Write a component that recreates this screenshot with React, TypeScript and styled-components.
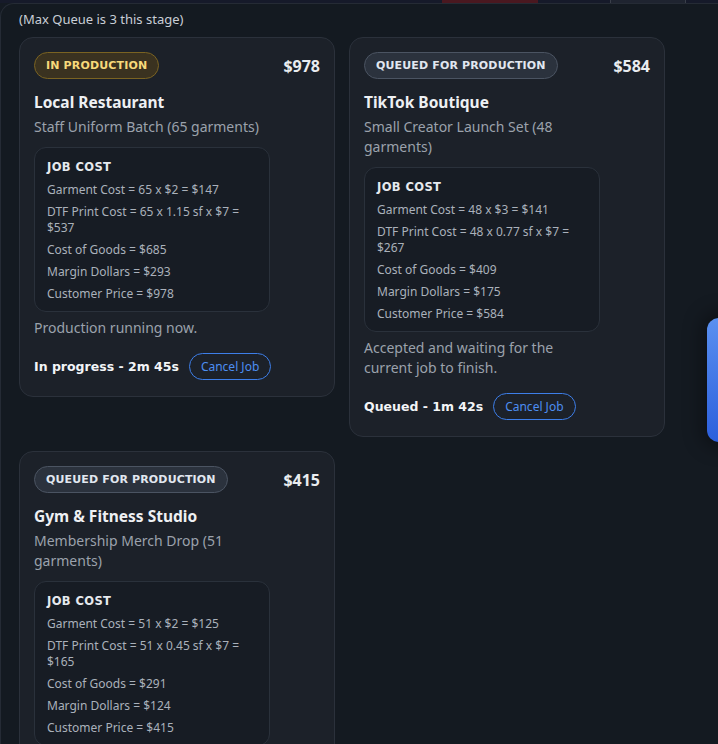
import React from 'react'
import styled, { createGlobalStyle } from 'styled-components'

type Status = 'production' | 'queued'

interface Job {
    status: Status
    price: string
    client: string
    order: string
    costs: string[]
    note: string
    timer: string
}

const jobs: Job[] = [
    {
        status: 'production',
        price: '$978',
        client: 'Local Restaurant',
        order: 'Staff Uniform Batch (65 garments)',
        costs: [
            'Garment Cost = 65 x $2 = $147',
            'DTF Print Cost = 65 x 1.15 sf x $7 = $537',
            'Cost of Goods = $685',
            'Margin Dollars = $293',
            'Customer Price = $978',
        ],
        note: 'Production running now.',
        timer: 'In progress - 2m 45s',
    },
    {
        status: 'queued',
        price: '$584',
        client: 'TikTok Boutique',
        order: 'Small Creator Launch Set (48 garments)',
        costs: [
            'Garment Cost = 48 x $3 = $141',
            'DTF Print Cost = 48 x 0.77 sf x $7 = $267',
            'Cost of Goods = $409',
            'Margin Dollars = $175',
            'Customer Price = $584',
        ],
        note: 'Accepted and waiting for the current job to finish.',
        timer: 'Queued - 1m 42s',
    },
    {
        status: 'queued',
        price: '$415',
        client: 'Gym & Fitness Studio',
        order: 'Membership Merch Drop (51 garments)',
        costs: [
            'Garment Cost = 51 x $2 = $125',
            'DTF Print Cost = 51 x 0.45 sf x $7 = $165',
            'Cost of Goods = $291',
            'Margin Dollars = $124',
            'Customer Price = $415',
        ],
        note: 'Accepted and waiting for the current job to finish.',
        timer: 'Queued - 1m 10s',
    },
]

const App = () => {
    return (
        <>
            <GlobalStyle />
            <Screen>
                <TopStrip>
                    <RedChip />
                    <DarkChip />
                </TopStrip>
                <Panel>
                    <Hint>(Max Queue is 3 this stage)</Hint>
                    <Grid>
                        {jobs.map((job, index) => (
                            <Card key={`job-card-${index}`}>
                                <Main>
                                    <Badge $status={job.status}>
                                        {job.status === 'production' ? 'IN PRODUCTION' : 'QUEUED FOR PRODUCTION'}
                                    </Badge>
                                    <Client>{job.client}</Client>
                                    <Order>{job.order}</Order>
                                    <CostBox>
                                        <CostTitle>JOB COST</CostTitle>
                                        {job.costs.map((line, i) => (
                                            <CostLine key={`cost-${index}-${i}`}>{line}</CostLine>
                                        ))}
                                    </CostBox>
                                    <Note>{job.note}</Note>
                                    <Footer>
                                        <Timer>{job.timer}</Timer>
                                        <CancelButton>Cancel Job</CancelButton>
                                    </Footer>
                                </Main>
                                <Price>{job.price}</Price>
                            </Card>
                        ))}
                    </Grid>
                </Panel>
                <SideTab />
            </Screen>
        </>
    )
}

const GlobalStyle = createGlobalStyle`
    html, body {
        margin: 0;
        padding: 0;
        background: #10141c;
        font-family: "Noto Sans", "Open Sans", sans-serif;
    }
    #root {
        height: 744px;
        overflow: hidden;
    }
`

const Screen = styled.div`
    position: relative;
    height: 744px;
    display: flex;
    flex-flow: column nowrap;
    overflow: hidden;
    background: #141a22;
`

const TopStrip = styled.div`
    height: 3px;
    flex: 0 0 auto;
    background: #161a2a;
    display: flex;
    padding-left: 442px;
    gap: 72px;
`

const RedChip = styled.div`
    width: 96px;
    height: 3px;
    background: #4a1820;
`

const DarkChip = styled.div`
    width: 74px;
    height: 3px;
    background: #1f2430;
    border-left: 1px solid #3a3f4a;
    border-right: 1px solid #3a3f4a;
`

const Panel = styled.div`
    flex: 1 1 auto;
    background: #141a21;
    border-top: 1px solid #252b35;
    border-left: 1px solid #252b35;
    border-top-left-radius: 14px;
    padding: 6px 0 0 18px;
`

const Hint = styled.div`
    font-size: 13px;
    color: #c9ced6;
    line-height: 18px;
    margin-bottom: 9px;
`

const Grid = styled.div`
    display: grid;
    grid-template-columns: repeat(2, 316px);
    gap: 14px;
    align-items: start;
`

const Card = styled.div`
    background: #1c2129;
    border: 1px solid #2b313b;
    border-radius: 14px;
    padding: 14px 14px 16px 14px;
    display: flex;
    flex-flow: row nowrap;
    justify-content: space-between;
    gap: 12px;
`

const Main = styled.div`
    width: 236px;
    display: flex;
    flex-flow: column nowrap;
    align-items: flex-start;
`

const Badge = styled.span<{ $status: Status }>`
    display: inline-flex;
    align-items: center;
    box-sizing: border-box;
    height: 27px;
    padding: 0 11px;
    border-radius: 999px;
    font-family: "DejaVu Sans", Verdana, sans-serif;
    font-weight: 700;
    font-size: 11px;
    letter-spacing: 0.15px;
    background: ${p => (p.$status === 'production' ? '#3a3220' : '#2b323d')};
    border: 1px solid ${p => (p.$status === 'production' ? '#7a6322' : '#4b5462')};
    color: ${p => (p.$status === 'production' ? '#f7d97a' : '#e1e7f0')};
`

const Client = styled.div`
    margin-top: 12px;
    font-size: 15.5px;
    font-weight: 700;
    color: #eef0f3;
    line-height: 22px;
`

const Order = styled.div`
    margin-top: 4px;
    font-size: 14px;
    color: #9ba2ac;
    line-height: 20px;
`

const CostBox = styled.div`
    margin-top: 10px;
    width: 100%;
    box-sizing: border-box;
    background: #171c24;
    border: 1px solid #2a313b;
    border-radius: 12px;
    padding: 11px 12px 9px 12px;
    display: flex;
    flex-flow: column nowrap;
    gap: 6px;
`

const CostTitle = styled.div`
    font-family: "DejaVu Sans", Verdana, sans-serif;
    font-weight: 700;
    font-size: 11.5px;
    letter-spacing: 0.4px;
    color: #e6e9ee;
    line-height: 16px;
    margin-bottom: 1px;
`

const CostLine = styled.div`
    font-size: 12px;
    color: #aab1bb;
    line-height: 16px;
`

const Note = styled.div`
    margin-top: 6px;
    font-size: 14px;
    color: #9ba2ac;
    line-height: 20px;
`

const Footer = styled.div`
    margin-top: 15px;
    display: flex;
    flex-flow: row nowrap;
    align-items: center;
    gap: 10px;
    white-space: nowrap;
`

const Timer = styled.span`
    font-family: "DejaVu Sans", Verdana, sans-serif;
    font-weight: 700;
    font-size: 12.5px;
    color: #f3f5f7;
`

const CancelButton = styled.button`
    height: 27px;
    padding: 0 11px;
    border-radius: 999px;
    background: transparent;
    border: 1px solid #3d7ee8;
    color: #4d8ef2;
    font-family: "Noto Sans", sans-serif;
    font-size: 12px;
    cursor: pointer;
`

const Price = styled.div`
    margin-top: 3px;
    font-size: 16px;
    font-weight: 700;
    color: #e9ecef;
    line-height: 22px;
    white-space: nowrap;
`

const SideTab = styled.div`
    position: absolute;
    left: 707px;
    top: 318px;
    width: 40px;
    height: 124px;
    border-radius: 12px;
    background: linear-gradient(180deg, #5a90f0 0%, #2c5fdc 100%);
    box-shadow: 0 0 18px 6px rgba(0, 0, 0, 0.35);
`

export default App
